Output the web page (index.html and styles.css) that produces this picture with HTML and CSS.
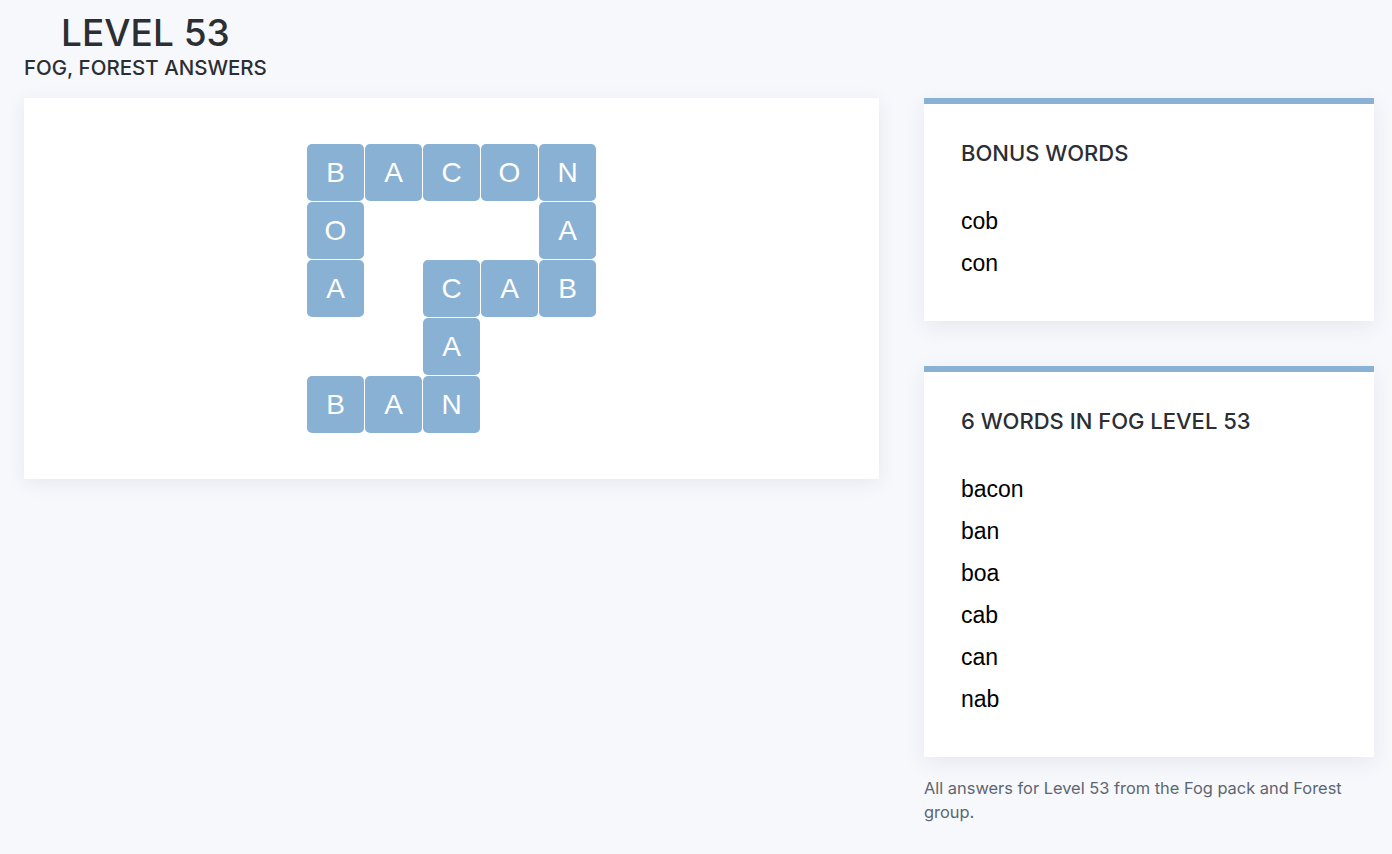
FILE: index.html
```html
<!DOCTYPE html>
<html lang="en">
  <head>
    <title>Level 53 - Fog, Forest Answers</title>
    <link rel="stylesheet" href="styles.css">
  </head>
  <body>
    <div class="heading">
      <h1>LEVEL 53</h1>
      <h2>FOG, FOREST ANSWERS</h2>
    </div>
    <div class="container">
      <div class="board">
        <div class="grid">
          <div class="tile">B</div><div class="tile">A</div><div class="tile">C</div><div class="tile">O</div><div class="tile">N</div>
          <div class="tile">O</div><div></div><div></div><div></div><div class="tile">A</div>
          <div class="tile">A</div><div></div><div class="tile">C</div><div class="tile">A</div><div class="tile">B</div>
          <div></div><div></div><div class="tile">A</div><div></div><div></div>
          <div class="tile">B</div><div class="tile">A</div><div class="tile">N</div><div></div><div></div>
        </div>
      </div>
      <div class="side">
        <div class="card">
          <h3>BONUS WORDS</h3>
          <ul>
            <li>cob</li>
            <li>con</li>
          </ul>
        </div>
        <div class="card">
          <h3>6 WORDS IN FOG LEVEL 53</h3>
          <ul>
            <li>bacon</li>
            <li>ban</li>
            <li>boa</li>
            <li>cab</li>
            <li>can</li>
            <li>nab</li>
          </ul>
        </div>
        <p class="note">All answers for Level 53 from the Fog pack and Forest group.</p>
      </div>
    </div>
  </body>
</html>
```

FILE: styles.css
```css
html {
  font-family: Inter, "Liberation Sans", sans-serif;
  background: #f7f8fc;
}

body {
  margin: 0;
  padding: 0 18px 0 24px;
  color: #2b2e33;
}

.heading {
  display: inline-block;
  text-align: center;
  padding-top: 11px;
}

h1 {
  margin: 0;
  font-size: 37px;
  line-height: 44px;
  font-weight: 500;
}

h2 {
  margin: 0;
  font-size: 20.5px;
  line-height: 26px;
  font-weight: 500;
}

.container {
  display: flex;
  flex-flow: row;
  gap: 45px;
  margin-top: 17px;
  align-items: flex-start;
}

.board {
  flex: 1;
  background: #fff;
  padding: 46px 0;
  box-shadow: 0 4px 18px rgba(30, 50, 90, 0.08);
  display: flex;
  justify-content: center;
}

.grid {
  display: grid;
  grid-template-columns: repeat(5, 57px);
  grid-auto-rows: 57px;
  gap: 1px;
}

.tile {
  background: #89b1d3;
  border-radius: 5px;
  color: #fff;
  font-family: "Liberation Sans", Arial, sans-serif;
  font-size: 28px;
  display: flex;
  align-items: center;
  justify-content: center;
}

.side {
  width: 450px;
  display: flex;
  flex-flow: column;
  gap: 45px;
}

.card {
  background: #fff;
  border-top: 6px solid #89b1d3;
  padding: 37px;
  box-shadow: 0 6px 20px rgba(30, 50, 90, 0.08);
}

h3 {
  margin: 0;
  font-size: 22px;
  line-height: 24px;
  font-weight: 500;
}

ul {
  list-style: none;
  margin: 35px 0 0 0;
  padding: 0;
}

li {
  font-family: "Liberation Sans", Arial, sans-serif;
  font-size: 23px;
  line-height: 42px;
  color: #000;
}

.note {
  margin: -26px 0 0 0;
  font-size: 16.4px;
  line-height: 24px;
  color: #5b6670;
}
```
